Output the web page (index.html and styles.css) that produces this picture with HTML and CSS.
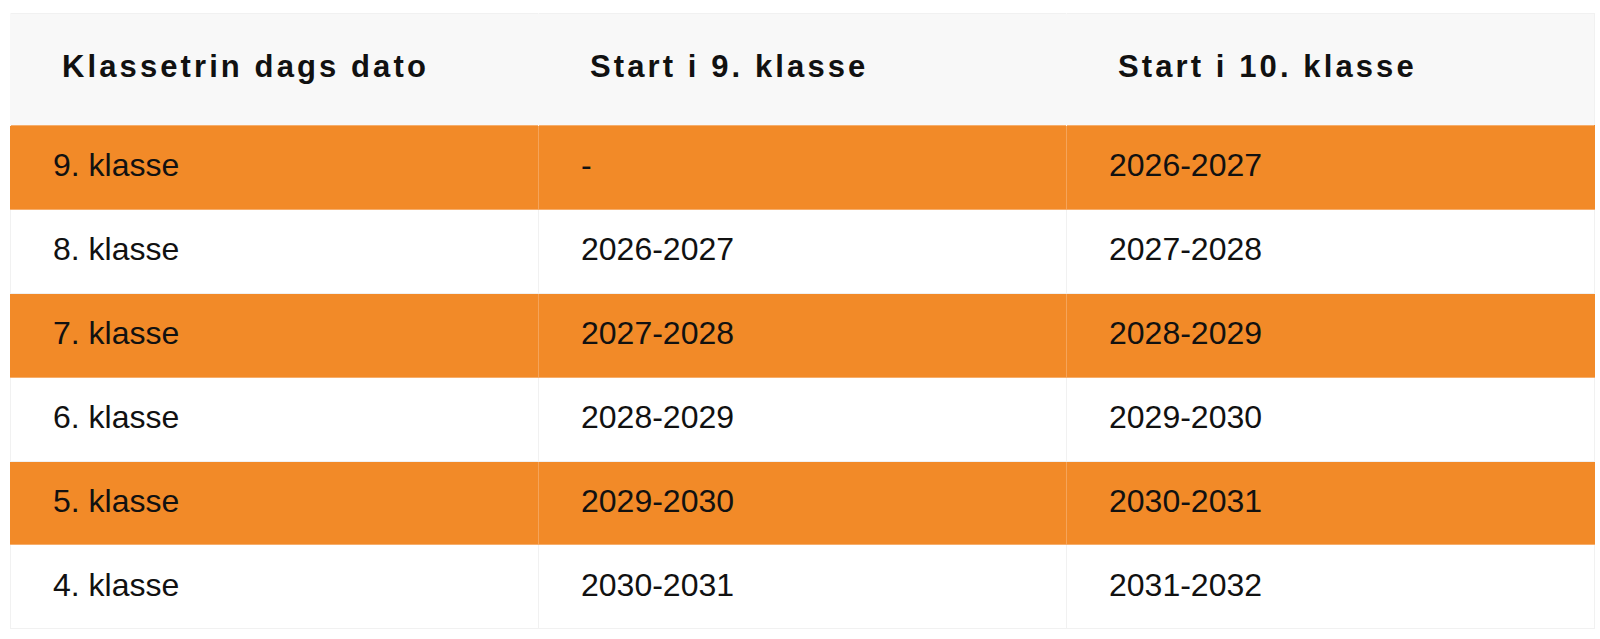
FILE: index.html
```html
<!DOCTYPE html>
<html lang="da">
<head>
<meta charset="utf-8">
<title>Klassetrin</title>
<link rel="stylesheet" href="styles.css">
</head>
<body>
<div class="wrap">
<table class="grid">
  <thead>
    <tr>
      <th>Klassetrin dags dato</th>
      <th>Start i 9. klasse</th>
      <th>Start i 10. klasse</th>
    </tr>
  </thead>
  <tbody>
    <tr class="hl"><td>9. klasse</td><td>-</td><td>2026-2027</td></tr>
    <tr><td>8. klasse</td><td>2026-2027</td><td>2027-2028</td></tr>
    <tr class="hl"><td>7. klasse</td><td>2027-2028</td><td>2028-2029</td></tr>
    <tr><td>6. klasse</td><td>2028-2029</td><td>2029-2030</td></tr>
    <tr class="hl"><td>5. klasse</td><td>2029-2030</td><td>2030-2031</td></tr>
    <tr><td>4. klasse</td><td>2030-2031</td><td>2031-2032</td></tr>
  </tbody>
</table>
</div>
</body>
</html>
```

FILE: styles.css
```css
html, body {
  margin: 0;
  padding: 0;
  background: #ffffff;
}

.wrap {
  padding: 13px 5px 0 10px;
}

.grid {
  width: 1585px;
  border-collapse: collapse;
  table-layout: fixed;
  font-family: "Liberation Sans", Arial, sans-serif;
  color: #111111;
  border: 1px solid #f1f1f1;
}

.grid th {
  height: 106px;
  padding: 0 0 5px 51px;
  background: #f8f8f8;
  font-size: 31px;
  font-weight: 700;
  letter-spacing: 3.1px;
  text-align: left;
  vertical-align: middle;
  border-left: 1px solid #f8f8f8;
}

.grid td {
  height: 79.9px;
  padding: 0 0 3px 42px;
  font-size: 32px;
  font-weight: 400;
  text-align: left;
  vertical-align: middle;
  border: 1px solid #f1f1f1;
  background: #ffffff;
}

.grid tr.hl td {
  background: #f28a28;
  border-top-color: #f6ae6c;
  border-bottom-color: #f6ae6c;
  border-left-color: #f5a45a;
  border-right-color: #f5a45a;
}

.grid tr.hl td:first-child {
  border-left-color: #f28a28;
}

.grid tr.hl td:last-child {
  border-right-color: #f28a28;
}
```
